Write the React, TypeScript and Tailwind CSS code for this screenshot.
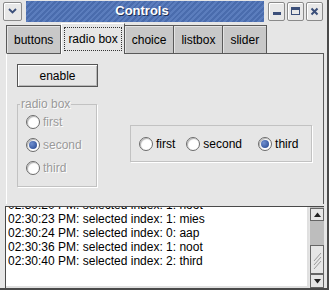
import React, { useState } from 'react';

const font = { fontFamily: '"Liberation Sans", Arial, sans-serif' };

const Radio: React.FC<{ checked: boolean; label: string; disabled?: boolean; onClick?: () => void }> = ({
  checked,
  label,
  disabled,
  onClick,
}) => (
  <div className="flex items-center h-[16px] gap-[3px] cursor-default" onClick={disabled ? undefined : onClick}>
    <span className="relative flex items-center justify-center w-[14px] h-[14px] rounded-full border border-[#6b6b6b] bg-white shadow-[inset_1px_1px_1px_#b5b5b5]">
      {checked && (
        <span className="w-[8px] h-[8px] rounded-full bg-[radial-gradient(circle_at_35%_35%,#6f8fd0,#23448c)]" />
      )}
    </span>
    <span
      className={
        disabled
          ? 'text-[12px] text-[#9a9a9a] [text-shadow:1px_1px_0_#ffffff]'
          : 'text-[12px] text-black'
      }
    >
      {label}
    </span>
  </div>
);

const tabs = ['buttons', 'radio box', 'choice', 'listbox', 'slider'];

const logLines = [
  '02:30:20 PM: selected index: 1: noot',
  '02:30:23 PM: selected index: 1: mies',
  '02:30:24 PM: selected index: 0: aap',
  '02:30:36 PM: selected index: 1: noot',
  '02:30:40 PM: selected index: 2: third',
];

const App: React.FC = () => {
  const [left, setLeft] = useState(1);
  const [right, setRight] = useState(2);
  const [enabled, setEnabled] = useState(false);

  return (
    <div
      className="w-[329px] h-[290px] bg-[#e6e6e6] border-r-2 border-b-2 border-[#4a4a4a] flex flex-col overflow-hidden"
      style={font}
    >
      {/* title bar */}
      <div className="h-[22px] flex items-center bg-[#e6e6e6] pl-[3px] pr-[4px] gap-[3px]">
        <div className="w-[19px] h-[19px] rounded-[2px] border border-[#8a8a8a] bg-[#e8e8e8] flex items-center justify-center shadow-[inset_1px_1px_0_#ffffff]">
          <svg width="9" height="6" viewBox="0 0 9 6">
            <path d="M1 1 L4.5 4.5 L8 1" stroke="#3b4f7a" strokeWidth="1.8" fill="none" />
          </svg>
        </div>
        <div className="flex-1 h-[21px] flex items-center justify-center bg-[repeating-linear-gradient(135deg,#4a6cad_0px,#4a6cad_2px,#5b7dbd_2px,#5b7dbd_4px)] ml-[1px]">
          <span className="text-white font-bold text-[13px] [text-shadow:1px_1px_0_#1e2f55] -ml-[6px]">Controls</span>
        </div>
        <div className="flex gap-[2px] ml-[1px]">
          {['min', 'max', 'close'].map((k) => (
            <div
              key={k}
              className="w-[17px] h-[19px] rounded-[2px] border border-[#8a8a8a] bg-[#e8e8e8] flex items-center justify-center shadow-[inset_1px_1px_0_#ffffff]"
            >
              {k === 'min' && <div className="w-[8px] h-[3px] bg-[#3b4f7a] mt-[5px]" />}
              {k === 'max' && <div className="w-[9px] h-[8px] border-[1.5px] border-t-[3px] border-[#3b4f7a]" />}
              {k === 'close' && (
                <svg width="9" height="9" viewBox="0 0 9 9">
                  <path d="M1.5 1.5 L7.5 7.5 M7.5 1.5 L1.5 7.5" stroke="#3b4f7a" strokeWidth="2" />
                </svg>
              )}
            </div>
          ))}
        </div>
      </div>

      {/* tabs */}
      <div className="flex items-end h-[31px] pl-[6px]">
        {tabs.map((t, i) =>
          i === 1 ? (
            <div
              key={t}
              className="h-[31px] px-[2px] pt-[3px] bg-[#e6e6e6] border-l border-t border-white border-r border-r-[#555555] -mb-[1px] relative z-10"
            >
              <div className="h-[24px] px-[3px] border border-dotted border-[#333] flex items-center text-[12px]">
                {t}
              </div>
            </div>
          ) : (
            <div
              key={t}
              className="h-[28px] px-[7px] bg-[#c8c8c8] border-t border-l border-r border-[#5a5a5a] flex items-center text-[12px] -ml-px first:ml-0 shadow-[inset_1px_1px_0_#e4e4e4]"
            >
              {t}
            </div>
          )
        )}
      </div>

      {/* panel */}
      <div className="mx-[6px] mr-[3px] h-[151px] border-t border-t-[#5a5a5a] border-l border-l-white border-r border-r-[#5a5a5a] bg-[#e6e6e6] flex flex-col pl-[10px] pt-[10px]">
        <button
          onClick={() => setEnabled(!enabled)}
          className="w-[81px] h-[23px] border border-[#555] bg-[#e6e6e6] text-[12px] shadow-[inset_1px_1px_0_#ffffff,inset_-1px_-1px_0_#b8b8b8]"
        >
          enable
        </button>
        <div className="flex items-center mt-[17px]">
          <div className="relative w-[80px] h-[83px] border border-[#c2c2c2] shadow-[1px_1px_0_#ffffff] flex flex-col gap-[7px] pl-[8px] pt-[9px]">
            <span className="absolute -top-[8px] left-[2px] px-[1px] bg-[#e6e6e6] text-[12px] text-[#9a9a9a] [text-shadow:1px_1px_0_#ffffff] leading-[14px]">
              radio box
            </span>
            {['first', 'second', 'third'].map((l, i) => (
              <Radio key={l} label={l} checked={left === i} disabled={!enabled} onClick={() => setLeft(i)} />
            ))}
          </div>
          <div className="ml-[33px] w-[182px] h-[37px] border border-[#c2c2c2] shadow-[1px_1px_0_#ffffff] flex items-center pl-[8px] -mt-[4px]">
            <Radio label="first" checked={right === 0} onClick={() => setRight(0)} />
            <div className="ml-[11px]">
              <Radio label="second" checked={right === 1} onClick={() => setRight(1)} />
            </div>
            <div className="ml-[16px]">
              <Radio label="third" checked={right === 2} onClick={() => setRight(2)} />
            </div>
          </div>
        </div>
      </div>

      {/* log */}
      <div className="flex ml-[5px] mr-[3px] flex-1 mt-[2px] border-t border-l border-[#4a4a4a] bg-white">
        <div className="flex-1 overflow-hidden border-r-2 border-b-2 border-[#e0e0e0] pl-[2px]">
          <div className="-mt-[9px]">
            {logLines.map((l) => (
              <div key={l} className="text-[12px] leading-[14px] text-black whitespace-nowrap">
                {l}
              </div>
            ))}
          </div>
        </div>
        <div className="w-[15px] flex flex-col bg-[#bdbdbd] border-l border-[#e6e6e6]">
          <div className="h-[13px] bg-[#e6e6e6] border border-[#666] flex items-center justify-center mt-[1px]">
            <svg width="7" height="5" viewBox="0 0 7 5">
              <path d="M0 5 L3.5 0.5 L7 5 Z" fill="#222" />
            </svg>
          </div>
          <div className="flex-1" />
          <div className="h-[29px] bg-[#e6e6e6] border border-[#666] flex items-center justify-center">
            <svg width="9" height="18" viewBox="0 0 9 18">
              <path d="M1 10 L8 2 M1 14 L8 6 M1 18 L8 10" stroke="#9a9a9a" strokeWidth="1" />
            </svg>
          </div>
          <div className="h-[14px] bg-[#e6e6e6] border border-[#666] flex items-center justify-center">
            <svg width="7" height="5" viewBox="0 0 7 5">
              <path d="M0 0 L3.5 4.5 L7 0 Z" fill="#222" />
            </svg>
          </div>
        </div>
      </div>
    </div>
  );
};

export default App;
